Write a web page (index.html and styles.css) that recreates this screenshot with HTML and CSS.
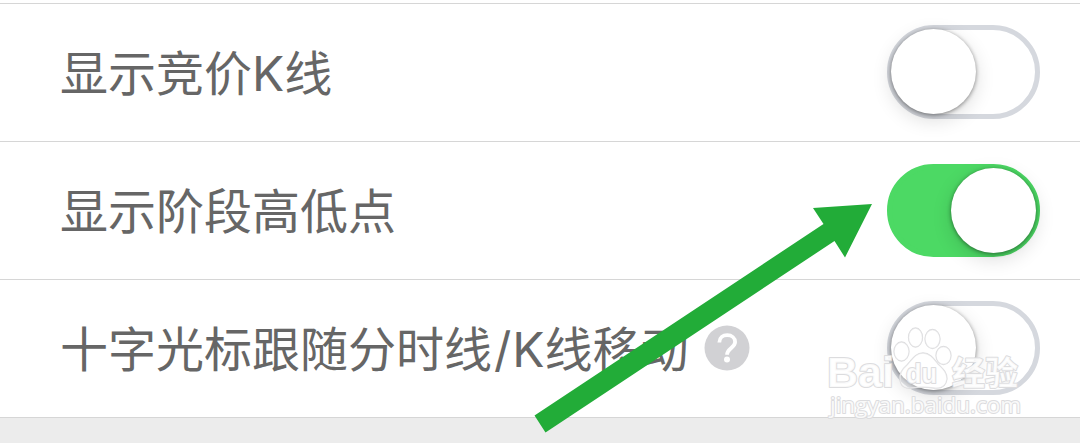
FILE: index.html
```html
<!DOCTYPE html>
<html lang="zh-CN">
<head>
  <meta charset="UTF-8" />
  <meta name="viewport" content="width=device-width, initial-scale=1.0" />
  <title>K线设置</title>
  <link rel="stylesheet" href="styles.css">
</head>
<body>

  <!-- Settings -->
  <div class="settings">
    <div class="row">
      <span class="label">显示竞价<span class="latin">K</span>线</span>
      <div class="switch"><div class="knob"></div></div>
    </div>

    <div class="row">
      <span class="label">显示阶段高低点</span>
      <div class="switch on"><div class="knob"></div></div>
    </div>

    <div class="row">
      <span class="label">十字光标跟随分时线<span class="latin slash">/</span><span class="latin">K</span>线移动</span>
      <svg class="help" viewBox="0 0 46 46">
        <circle cx="23" cy="23" r="22.5" fill="#d1d1d4" />
        <path d="M15.3 17.5C15.5 12.5 19 10.2 23.2 10.2c4.5 0 7.900 2.700 7.900 6.900 0 5.600-8 6.400-8 12.600" fill="none" stroke="#fff" stroke-width="3.8" />
        <circle cx="23" cy="34.5" r="3" fill="#fff" />
      </svg>
      <div class="switch"><div class="knob"></div></div>
    </div>
  </div>

  <!-- Arrow and watermark -->
  <svg class="overlay" viewBox="0 0 1080 443">
    <polygon points="872,204 813,208 823.5,224 534.5,415.5 545.5,432.5 834.5,241 845,257.5" fill="#22ac38" />
    <g class="watermark">
      <g class="paw">
        <ellipse cx="901.5" cy="351.5" rx="7.5" ry="9.5" />
        <ellipse cx="915.5" cy="337.5" rx="7" ry="9.5" />
        <ellipse cx="932.5" cy="339" rx="7.5" ry="9.5" />
        <ellipse cx="943.5" cy="355.5" rx="7.5" ry="9" />
        <path d="M923 353c-8 0-11 7-16 12-6 5-8 9-7 15 1 7 6 9 12 8 7-1 15-1 22 0 7 1 12-2 13-9 0-7-4-10-9-15-4-5-8-11-15-11z" />
      </g>
      <text class="brand" x="827" y="387" textLength="67" lengthAdjust="spacingAndGlyphs">Bai</text>
      <text class="du" x="906" y="383" textLength="31" lengthAdjust="spacingAndGlyphs">du</text>
      <text class="jingyan" x="952" y="385">经验</text>
      <text class="url" x="830" y="413" textLength="191" lengthAdjust="spacingAndGlyphs">jingyan.baidu.com</text>
    </g>
  </svg>

</body>
</html>
```
FILE: styles.css
```css
* {
  box-sizing: border-box;
}

body {
  margin: 0;
  padding-top: 3px;
  height: 443px;
  background-color: #ececec;
  background-image: linear-gradient(#fff, #fff);
  background-size: 100% 3px;
  background-repeat: no-repeat;
  font-family: "Noto Sans CJK SC", sans-serif;
  color: #666;
  overflow: hidden;
}

.settings {
  background: #fff;
  border-bottom: 1px solid #d6d6d6;
}

.row {
  display: flex;
  align-items: center;
  height: 138px;
  padding: 0 40px 0 60px;
  border-top: 1px solid #d6d6d6;
}

.label {
  font-size: 48px;
  line-height: 70px;
  padding-bottom: 5px;
  white-space: nowrap;
}

.latin {
  font-family: Inter, sans-serif;
  line-height: 0;
}

.slash {
  margin: 0 1px 0 2px;
}

.help {
  width: 46px;
  height: 46px;
  margin-left: 15px;
  margin-bottom: 2px;
}

/* Switch */
.switch {
  width: 153px;
  height: 94px;
  margin-left: auto;
  margin-bottom: 1px;
  padding-bottom: 1px;
  border: 5px solid #d5d8de;
  border-radius: 47px;
  display: flex;
  align-items: center;
}

.knob {
  flex: none;
  width: 85px;
  height: 85px;
  margin-left: -1px;
  border-radius: 50%;
  background: #fff;
  box-shadow: 0 1px 4px rgba(0, 0, 0, 0.45), 0 6px 20px rgba(0, 0, 0, 0.14);
}

.switch.on {
  height: 93px;
  margin-bottom: 0;
  padding-bottom: 0;
  background: #4cd964;
  border-color: #4cd964;
  justify-content: flex-end;
}

.switch.on .knob {
  margin-left: 0;
  margin-right: -1px;
}

.overlay {
  position: absolute;
  top: 0;
  left: 0;
  width: 1080px;
  height: 443px;
}

/* Watermark */
.watermark {
  fill: rgba(255, 255, 255, 0.85);
  stroke: #dcdcde;
  stroke-width: 2px;
  stroke-linejoin: round;
  paint-order: stroke;
  font-family: "Liberation Sans", sans-serif;
}

.paw {
  fill: rgba(255, 255, 255, 0.35);
  stroke-width: 1.3px;
}

.brand {
  font-size: 43px;
  font-weight: bold;
}

.du {
  font-size: 27px;
  font-weight: bold;
}

.jingyan {
  font-family: "Noto Sans CJK SC", sans-serif;
  font-size: 33px;
  font-weight: bold;
}

.url {
  font-family: "Open Sans", sans-serif;
  font-size: 22px;
}
```
